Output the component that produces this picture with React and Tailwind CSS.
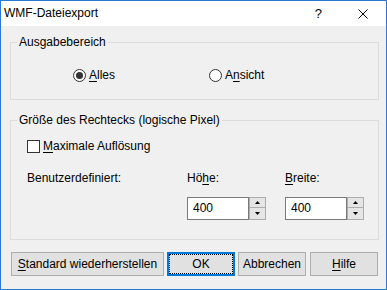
import React from 'react';

function Key({ children }) {
    return <span className="underline decoration-1 underline-offset-[2px]">{children}</span>;
}

function Radio({ checked, children }) {
    return (
        <div className="flex items-center">
            <span className="flex h-[13px] w-[13px] items-center justify-center rounded-full border border-[#333333] bg-white">
                {checked && <span className="h-[7px] w-[7px] rounded-full bg-[#333333]" />}
            </span>
            <span className="ml-[3px]">{children}</span>
        </div>
    );
}

function Arrow({ up }) {
    return (
        <svg width="5" height="3" viewBox="0 0 5 3">
            <path d={up ? 'M0 3 L2.5 0 L5 3 Z' : 'M0 0 L2.5 3 L5 0 Z'} fill="#000" />
        </svg>
    );
}

function SpinBox({ value }) {
    return (
        <div className="flex h-[23px] w-[79px]">
            <div className="flex w-[62px] items-center border border-[#7a7a7a] bg-white pl-[5px]">{value}</div>
            <div className="flex w-[17px] flex-col">
                <div className="flex h-[11px] items-center justify-center border border-[#adadad] bg-[#e5e5e5]">
                    <Arrow up />
                </div>
                <div className="flex h-[12px] items-center justify-center border border-t-0 border-[#adadad] bg-[#e5e5e5]">
                    <Arrow />
                </div>
            </div>
        </div>
    );
}

function Button({ width, children }) {
    return (
        <div className={`${width} flex h-[24px] items-center justify-center border border-[#adadad] bg-[#e1e1e1]`}>
            {children}
        </div>
    );
}

export default function App() {
    return (
        <div className="flex h-[290px] w-[387px] flex-col border border-[#2b79d7] bg-[#f0f0f0] font-['Liberation_Sans',Arial,sans-serif] text-[12px] leading-[15px] text-black">
            {/* Title bar */}
            <div className="flex h-[25px] shrink-0 items-center bg-white pl-[3px] pr-[18px]">
                <span>WMF-Dateiexport</span>
                <span className="ml-auto text-[13px]">?</span>
                <svg className="ml-[36px]" width="10" height="10" viewBox="0 0 10 10">
                    <path d="M0.5 0.5 L9.5 9.5 M9.5 0.5 L0.5 9.5" stroke="#000" strokeWidth="1" />
                </svg>
            </div>

            {/* Body */}
            <div className="flex flex-col pl-[9px]">
                <fieldset className="mt-[9px] h-[65px] w-[369px] border border-[#dcdcdc]">
                    <legend className="ml-[6px] px-[2px] leading-[15px]">Ausgabebereich</legend>
                    <div className="mt-[18px] flex h-[15px] items-center pl-[62px]">
                        <div className="w-[136px]">
                            <Radio checked><Key>A</Key>lles</Radio>
                        </div>
                        <Radio>A<Key>n</Key>sicht</Radio>
                    </div>
                </fieldset>

                <fieldset className="mt-[13px] h-[127px] w-[369px] border border-[#dcdcdc]">
                    <legend className="ml-[6px] px-[2px] leading-[15px]">Größe des Rechtecks (logische Pixel)</legend>
                    <div className="mt-[11px] flex h-[15px] items-center pl-[16px]">
                        <span className="h-[13px] w-[13px] border border-[#333333] bg-white" />
                        <span className="ml-[3px]"><Key>M</Key>aximale Auflösung</span>
                    </div>
                    <div className="mt-[17px] flex h-[15px] items-center pl-[16px]">
                        <span className="w-[160px]">Benutzerdefiniert:</span>
                        <span className="w-[98px]">Hö<Key>h</Key>e:</span>
                        <span><Key>B</Key>reite:</span>
                    </div>
                    <div className="mt-[11px] flex pl-[176px]">
                        <SpinBox value="400" />
                        <div className="ml-[19px]">
                            <SpinBox value="400" />
                        </div>
                    </div>
                </fieldset>

                <div className="ml-[1px] mt-[12px] flex">
                    <Button width="w-[153px]"><Key>S</Key>tandard wiederherstellen</Button>
                    <div className="ml-[3px] flex h-[24px] w-[68px] border-2 border-[#0078d7] bg-[#e1e1e1]">
                        <span className="flex flex-1 items-center justify-center border border-dotted border-black">OK</span>
                    </div>
                    <div className="ml-[3px]">
                        <Button width="w-[68px]">Abbrechen</Button>
                    </div>
                    <div className="ml-[4px]">
                        <Button width="w-[68px]"><Key>H</Key>ilfe</Button>
                    </div>
                </div>
            </div>
        </div>
    );
}
